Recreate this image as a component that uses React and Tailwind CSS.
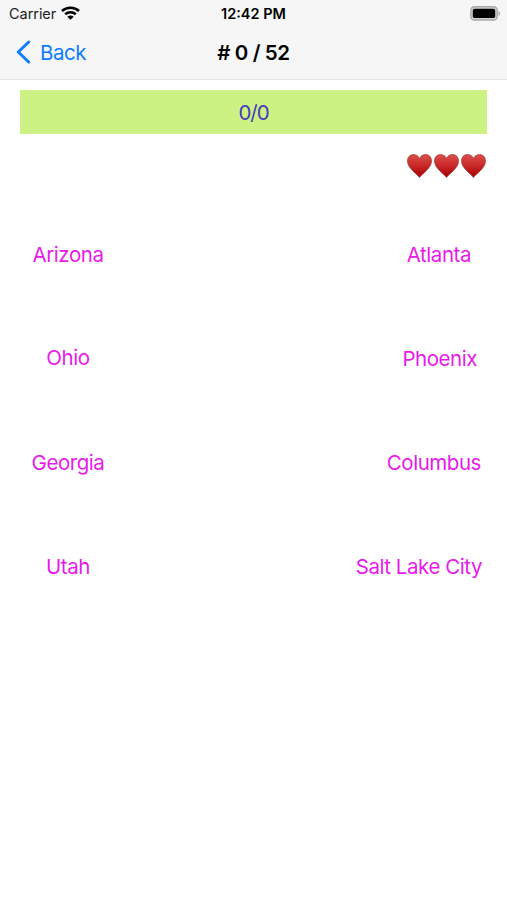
import React from 'react';

const rows = [
    { state: 'Arizona', city: 'Atlanta', statePad: 'pt-[3px]', cityPad: 'pt-[3px] pr-9' },
    { state: 'Ohio', city: 'Phoenix', statePad: 'pt-0', cityPad: 'pt-[3px] pr-[30px]' },
    { state: 'Georgia', city: 'Columbus', statePad: 'pt-[3px]', cityPad: 'pt-[3px] pr-[26px]' },
    { state: 'Utah', city: 'Salt Lake City', statePad: 'pt-[3px]', cityPad: 'pt-[3px] pr-[25px]' },
];

const WifiIcon = () => (
    <svg className="-mt-[2px]" width="19" height="14" viewBox="0 0 19 14" fill="none" stroke="#000" strokeWidth="2.6">
        <path d="M1 5C5.6 0.6 13.4 0.6 18 5" />
        <path d="M4.2 8.3C7.2 5.5 11.8 5.5 14.8 8.3" />
        <path d="M9.5 13.8L6.3 10.7C8.1 9 10.9 9 12.7 10.7Z" fill="#000" stroke="none" />
    </svg>
);

const BatteryIcon = () => (
    <svg width="31" height="15" viewBox="0 0 31 15">
        <rect x="0.8" y="0.8" width="26.4" height="13.2" rx="3.6" fill="#d2d2d2" stroke="#aaa" strokeWidth="1.4" />
        <rect x="2.8" y="2.8" width="22.4" height="9.2" rx="1.8" fill="#000" />
        <path d="M28.5 5C30.6 5.8 30.6 9 28.5 9.8Z" fill="#aaa" />
    </svg>
);

const Heart = () => (
    <svg width="27" height="26" viewBox="0 0 27 26">
        <defs>
            <linearGradient id="heart" x1="0" y1="0" x2="0" y2="1">
                <stop offset="0" stopColor="#d9504b" />
                <stop offset="0.45" stopColor="#cb2b2a" />
                <stop offset="0.8" stopColor="#b40d10" />
                <stop offset="1" stopColor="#9c0a0d" />
            </linearGradient>
        </defs>
        <path
            d="M13.5 24.6C11.2 20.8 1.5 15.4 1.5 8C1.5 4.2 4 1.6 7.3 1.6C10.2 1.6 12.4 2.9 13.5 5.4C14.6 2.9 16.8 1.6 19.7 1.6C23 1.6 25.5 4.2 25.5 8C25.5 15.4 15.8 20.8 13.5 24.6Z"
            fill="url(#heart)"
            stroke="#a3302e"
            strokeWidth="0.7"
        />
    </svg>
);

const Header = () => (
    <header className="h-20 bg-[#f6f6f6] border-b border-[#e6e6e6]">
        <div className="h-[27px] grid grid-cols-3 items-center text-[14.5px] leading-[27px]">
            <div className="flex items-center gap-[5px] pl-[9px] text-[#222]">
                <span className="tracking-[-0.05px]">Carrier</span>
                <WifiIcon />
            </div>
            <span className="text-center font-semibold">12:42 PM</span>
            <div className="flex justify-end pr-[6px]">
                <BatteryIcon />
            </div>
        </div>
        <div className="h-[50px] grid grid-cols-3 items-center">
            <button className="flex items-center gap-[9px] pl-4 text-[20.5px] tracking-[-0.5px] text-[#0f7dfa]">
                <svg width="15" height="24" viewBox="0 0 15 24" fill="none" stroke="currentColor" strokeWidth="3" strokeLinecap="round" strokeLinejoin="round">
                    <path d="M12.7 2L2.3 12L12.7 22" />
                </svg>
                <span className="pt-[2px]">Back</span>
            </button>
            <h1 className="pt-[2px] text-center text-[20.5px] tracking-[-0.4px] font-semibold whitespace-nowrap"># 0 / 52</h1>
        </div>
    </header>
);

const App = () => {
    return (
        <div className="h-[900px] w-full bg-white font-['Inter',sans-serif] text-black overflow-hidden">
            <Header />
            <main className="pt-[10px]">
                <div className="mx-5 h-11 pt-[2px] bg-[#ccf284] flex items-center justify-center text-[20.5px] tracking-[-1.1px] text-[#4a39bd]">
                    0/0
                </div>
                <div className="h-[68px] pt-[19px] pr-5 flex justify-end items-start">
                    <Heart />
                    <Heart />
                    <Heart />
                </div>
                {rows.map(({ state, city, statePad, cityPad }) => (
                    <div key={state} className="h-[104px] flex items-center justify-between text-[20.5px] tracking-[-0.45px] text-[#e81aea]">
                        <span className={`w-[136px] text-center ${statePad}`}>{state}</span>
                        <span className={cityPad}>{city}</span>
                    </div>
                ))}
            </main>
        </div>
    );
};

export default App;
